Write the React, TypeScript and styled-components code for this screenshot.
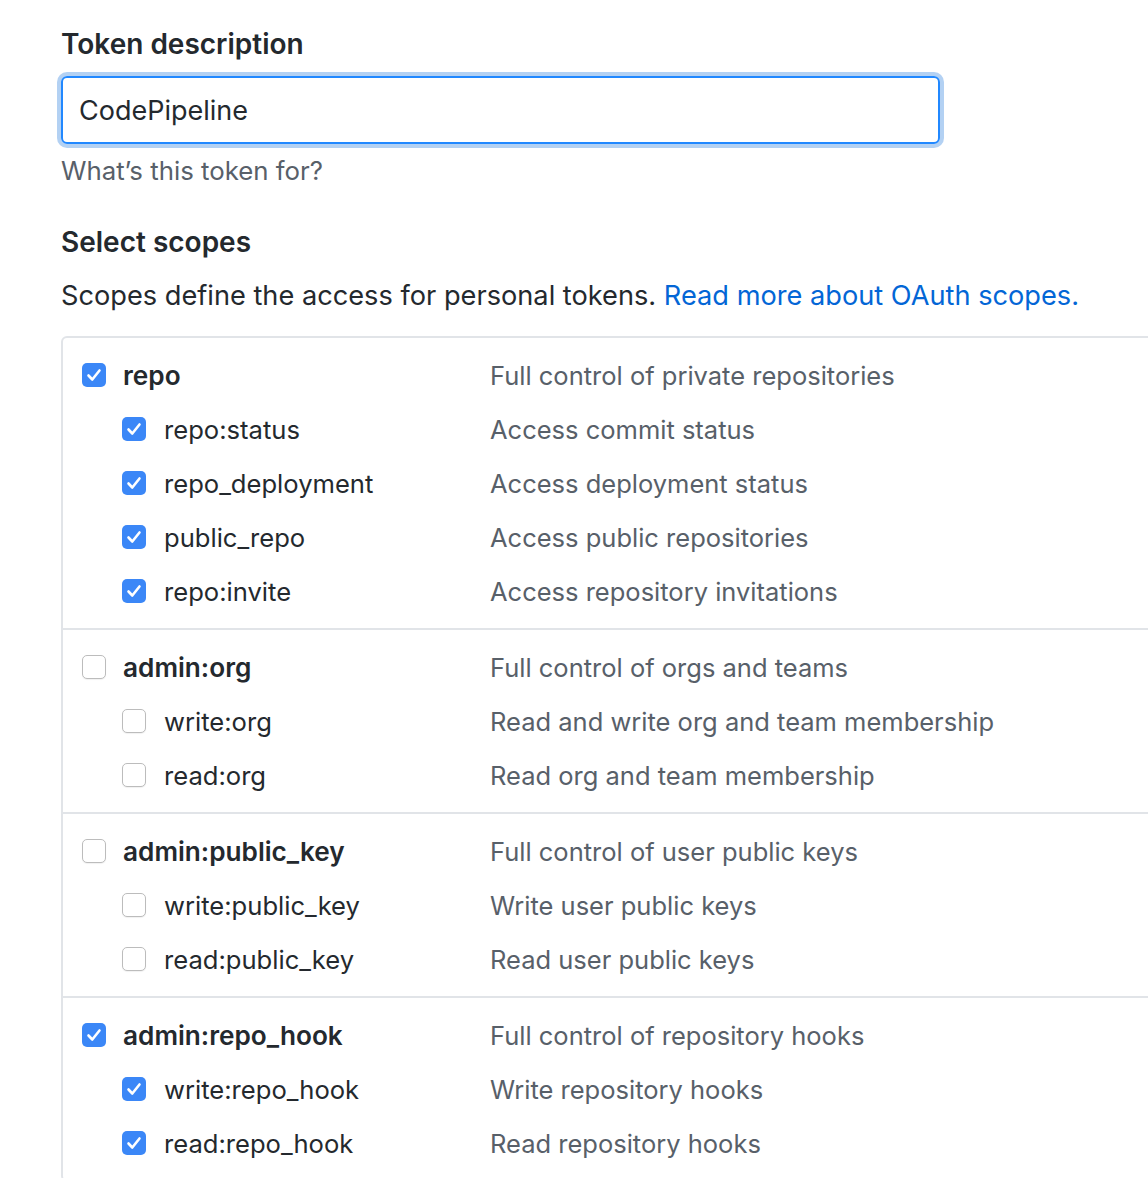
import React from "react";
import styled, { createGlobalStyle } from "styled-components";

const Global = createGlobalStyle`
  html, body { margin: 0; padding: 0; background: #fff; overflow: hidden; }
  body { font-family: Inter, "Noto Sans", "Liberation Sans", sans-serif; color: #24292e; }
`;

const Page = styled.div`
  padding: 22px 0 0 61px;
  width: 1300px;
`;

const Label = styled.div`
  font-size: 28px;
  font-weight: 600;
  line-height: 44px;
  margin: 0 0 10px 0;
`;

const InputWrap = styled.div`
  width: 879px;
  height: 68px;
  box-sizing: border-box;
  border: 2px solid #2188ff;
  border-radius: 6px;
  box-shadow: 0 0 0 4px rgba(3, 102, 214, 0.3);
  display: flex;
  align-items: center;
  padding-left: 16px;
  font-size: 27px;
  color: #24292e;
`;

const Note = styled.div`
  font-size: 25.8px;
  color: #586069;
  line-height: 40px;
  margin-top: 7px;
`;

const Heading = styled.div`
  font-size: 28px;
  font-weight: 600;
  line-height: 44px;
  margin-top: 29px;
`;

const Intro = styled.p`
  font-size: 27.2px;
  line-height: 44px;
  margin: 10px 0 0 0;
`;

const Link = styled.a`
  color: #0366d6;
  text-decoration: none;
`;

const Box = styled.div`
  margin-top: 18px;
  width: 1200px;
  border: 2px solid #e1e4e8;
  border-radius: 6px;
`;

const Section = styled.div`
  padding: 10px 0;
  & + & {
    border-top: 2px solid #e1e4e8;
  }
`;

const Row = styled.div`
  display: grid;
  grid-template-columns: 408px 1fr;
  height: 54px;
  align-items: center;
  padding-left: 19px;
`;

const Name = styled.div<{ $sub?: boolean }>`
  display: flex;
  align-items: center;
  padding-left: ${(p) => (p.$sub ? 40 : 0)}px;
  gap: ${(p) => (p.$sub ? 18 : 17)}px;
  font-size: ${(p) => (p.$sub ? 25.6 : 26.2)}px;
  font-weight: ${(p) => (p.$sub ? 400 : 600)};
  color: #24292e;
`;

const Desc = styled.div`
  font-size: 25.5px;
  color: #586069;
`;

const Box24 = styled.span<{ $on: boolean }>`
  width: 24px;
  height: 24px;
  box-sizing: border-box;
  border-radius: 5px;
  flex: none;
  display: inline-flex;
  align-items: center;
  justify-content: center;
  background: ${(p) => (p.$on ? "#3b87f7" : "#fff")};
  border: ${(p) => (p.$on ? "none" : "1px solid #bcbcbc")};
  box-shadow: ${(p) => (p.$on ? "none" : "0 1px 1px rgba(0,0,0,0.06)")};
`;

const Check = ({ on }: { on: boolean }) => (
  <Box24 $on={on}>
    {on && (
      <svg width="24" height="24" viewBox="0 0 24 24">
        <path d="M6.5 12.5 L10.3 16.5 L17.5 7.5" fill="none" stroke="#fff" strokeWidth="2.6" strokeLinecap="round" strokeLinejoin="round" />
      </svg>
    )}
  </Box24>
);

type Scope = { name: string; desc: string; on: boolean; sub?: boolean };

const groups: Scope[][] = [
  [
    { name: "repo", desc: "Full control of private repositories", on: true },
    { name: "repo:status", desc: "Access commit status", on: true, sub: true },
    { name: "repo_deployment", desc: "Access deployment status", on: true, sub: true },
    { name: "public_repo", desc: "Access public repositories", on: true, sub: true },
    { name: "repo:invite", desc: "Access repository invitations", on: true, sub: true },
  ],
  [
    { name: "admin:org", desc: "Full control of orgs and teams", on: false },
    { name: "write:org", desc: "Read and write org and team membership", on: false, sub: true },
    { name: "read:org", desc: "Read org and team membership", on: false, sub: true },
  ],
  [
    { name: "admin:public_key", desc: "Full control of user public keys", on: false },
    { name: "write:public_key", desc: "Write user public keys", on: false, sub: true },
    { name: "read:public_key", desc: "Read user public keys", on: false, sub: true },
  ],
  [
    { name: "admin:repo_hook", desc: "Full control of repository hooks", on: true },
    { name: "write:repo_hook", desc: "Write repository hooks", on: true, sub: true },
    { name: "read:repo_hook", desc: "Read repository hooks", on: true, sub: true },
  ],
];

export default function App() {
  return (
    <>
      <Global />
      <Page>
        <Label>Token description</Label>
        <InputWrap>CodePipeline</InputWrap>
        <Note>What’s this token for?</Note>
        <Heading>Select scopes</Heading>
        <Intro>
          Scopes define the access for personal tokens. <Link href="#">Read more about OAuth scopes.</Link>
        </Intro>
        <Box>
          {groups.map((g, i) => (
            <Section key={i}>
              {g.map((s) => (
                <Row key={s.name}>
                  <Name $sub={s.sub}>
                    <Check on={s.on} />
                    {s.name}
                  </Name>
                  <Desc>{s.desc}</Desc>
                </Row>
              ))}
            </Section>
          ))}
        </Box>
      </Page>
    </>
  );
}
